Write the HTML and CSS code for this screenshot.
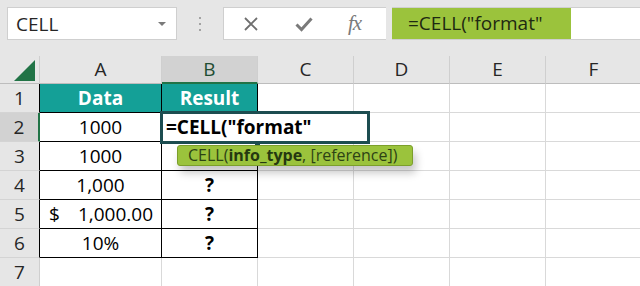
FILE: index.html
```html
<!DOCTYPE html>
<html lang="en">
<head>
    <meta charset="UTF-8">
    <title>CELL function</title>
    <link rel="stylesheet" href="styles.css">
</head>
<body>
    <div class="toolbar">
        <div class="name-box">
            <span>CELL</span>
            <span class="arrow"></span>
        </div>
        <div class="dots"><i></i><i></i><i></i></div>
        <div class="buttons">
            <svg class="btn" width="16" height="16" viewBox="0 0 16 16">
                <path d="M2 2 L14 14 M14 2 L2 14" stroke="#6e6e6e" stroke-width="1.8" fill="none"/>
            </svg>
            <svg class="btn" width="18" height="16" viewBox="0 0 18 16">
                <path d="M1.5 8.5 L6.5 13.5 L16.5 2.5" stroke="#7a7a7a" stroke-width="3" fill="none"/>
            </svg>
            <span class="fx">fx</span>
        </div>
        <div class="formula">
            <span class="formula-text">=CELL("format"</span>
        </div>
    </div>

    <div class="sheet">
        <div class="grid">
            <div class="corner">
                <svg width="21" height="21" viewBox="0 0 21 21"><polygon points="21,0 21,21 0,21" fill="#217346"/></svg>
            </div>
            <div class="ch">A</div>
            <div class="ch sel">B</div>
            <div class="ch">C</div>
            <div class="ch">D</div>
            <div class="ch">E</div>
            <div class="ch">F</div>

            <div class="rh edge">1</div>
            <div class="c t head">Data</div>
            <div class="c t head">Result</div>
            <div class="c"></div><div class="c"></div><div class="c"></div><div class="c"></div>

            <div class="rh edge sel">2</div>
            <div class="c t">1000</div>
            <div class="c t"></div>
            <div class="c"></div><div class="c"></div><div class="c"></div><div class="c"></div>

            <div class="rh edge">3</div>
            <div class="c t">1000</div>
            <div class="c t q"></div>
            <div class="c"></div><div class="c"></div><div class="c"></div><div class="c"></div>

            <div class="rh edge">4</div>
            <div class="c t">1,000</div>
            <div class="c t q">?</div>
            <div class="c"></div><div class="c"></div><div class="c"></div><div class="c"></div>

            <div class="rh edge">5</div>
            <div class="c t acct"><span>$</span><span>1,000.00</span></div>
            <div class="c t q">?</div>
            <div class="c"></div><div class="c"></div><div class="c"></div><div class="c"></div>

            <div class="rh edge">6</div>
            <div class="c t">10%</div>
            <div class="c t q">?</div>
            <div class="c"></div><div class="c"></div><div class="c"></div><div class="c"></div>

            <div class="rh">7</div>
            <div class="c"></div><div class="c"></div><div class="c"></div><div class="c"></div><div class="c"></div><div class="c"></div>
        </div>

        <div class="editing">=CELL("format"</div>
        <div class="handle"></div>
        <div class="tip">CELL(<b>info_type</b>, [reference])</div>
    </div>
</body>
</html>
```

FILE: styles.css
```css
body {
    margin: 0;
    background-color: white;
    font-family: 'Open Sans', sans-serif;
    width: 640px;
    height: 286px;
    overflow: hidden;
}
.toolbar {
    display: flex;
    align-items: flex-start;
    height: 56px;
    padding-top: 7px;
    box-sizing: border-box;
    background-color: #e6e6e6;
}
.name-box {
    display: flex;
    align-items: center;
    justify-content: space-between;
    margin-left: 7px;
    width: 170px;
    height: 33px;
    padding: 0 8px;
    box-sizing: border-box;
    background-color: white;
    border: 1px solid #cfcfcf;
    font-size: 19px;
    color: #262626;
}
.arrow {
    width: 0;
    height: 0;
    border-left: 4px solid transparent;
    border-right: 4px solid transparent;
    border-top: 4px solid #7a7a7a;
    margin-right: 2px;
}
.dots {
    width: 46px;
    height: 33px;
    display: flex;
    flex-direction: column;
    align-items: center;
    justify-content: center;
    gap: 4px;
}
.dots i {
    display: block;
    width: 2px;
    height: 2px;
    background-color: #a3a3a3;
}
.buttons {
    display: flex;
    align-items: center;
    width: 163px;
    height: 33px;
    box-sizing: border-box;
    background-color: white;
    border: 1px solid #cfcfcf;
    border-right: none;
}
.buttons .btn:first-child {
    margin-left: 19px;
}
.buttons .btn + .btn {
    margin-left: 36px;
}
.fx {
    margin-left: 35px;
    font-family: 'Liberation Serif', serif;
    font-style: italic;
    font-size: 21px;
    color: #7a7a7a;
    letter-spacing: -1px;
}
.formula {
    margin-left: 6px;
    flex: 1;
    height: 33px;
    box-sizing: border-box;
    background-color: white;
    border-top: 1px solid #cfcfcf;
    border-bottom: 1px solid #cfcfcf;
}
.formula-text {
    display: inline-block;
    height: 31px;
    width: 179px;
    padding-left: 16px;
    box-sizing: border-box;
    background-color: #9bc33c;
    color: #1e2912;
    font-size: 19px;
    line-height: 30px;
}

.sheet {
    position: relative;
}
.grid {
    display: grid;
    grid-template-columns: 40px 122px repeat(5, 96px);
    grid-template-rows: 28px repeat(7, 29px);
    font-size: 19px;
}
.corner {
    display: flex;
    align-items: flex-end;
    justify-content: flex-end;
    padding: 0 4px 2px 0;
    background-color: #e6e6e6;
    border-right: 1px solid #cfcfcf;
    border-bottom: 1px solid #bdbdbd;
}
.ch {
    text-align: center;
    line-height: 27px;
    color: #262626;
    background-color: #e6e6e6;
    border-right: 1px solid #cfcfcf;
    border-bottom: 1px solid #bdbdbd;
}
.ch.sel {
    background-color: #d2d2d2;
    border-bottom: 2px solid #217346;
    line-height: 26px;
    color: #1f4d33;
}
.rh {
    text-align: center;
    line-height: 29px;
    color: #262626;
    background-color: #e6e6e6;
    border-right: 1px solid #cfcfcf;
    border-bottom: 1px solid #d4d4d4;
    box-sizing: border-box;
}
.rh.edge {
    border-right-color: #000;
}
.rh.sel {
    background-color: #d2d2d2;
    border-right: 2px solid #217346;
}
.c {
    box-sizing: border-box;
    border-right: 1px solid #d9d9d9;
    border-bottom: 1px solid #d9d9d9;
    text-align: center;
    line-height: 29px;
    color: #000;
}
.c.t {
    border-right-color: #000;
    border-bottom-color: #000;
}
.head {
    background-color: #14a097;
    color: white;
    font-weight: bold;
}
.q {
    font-weight: bold;
}
.acct {
    display: flex;
    justify-content: space-between;
    padding: 0 8px 0 9px;
}

.editing {
    position: absolute;
    left: 160px;
    top: 55px;
    width: 210px;
    height: 33px;
    box-sizing: border-box;
    border: 3px solid #1d4d50;
    background-color: white;
    padding-left: 3px;
    font-size: 19px;
    font-weight: bold;
    line-height: 26px;
    color: #000;
}
.handle {
    position: absolute;
    left: 255px;
    top: 87px;
    width: 5px;
    height: 3px;
    background-color: #1d4d50;
}
.tip {
    position: absolute;
    left: 177px;
    top: 89px;
    width: 236px;
    height: 21px;
    box-sizing: border-box;
    padding-left: 10px;
    background-color: #9bc33c;
    border: 1px solid #7c9f2b;
    border-radius: 3px;
    box-shadow: 3px 7px 9px rgba(0, 0, 0, 0.22);
    font-size: 16px;
    line-height: 19px;
    color: #2d4214;
    white-space: nowrap;
}
.tip b {
    color: #253810;
}
```
